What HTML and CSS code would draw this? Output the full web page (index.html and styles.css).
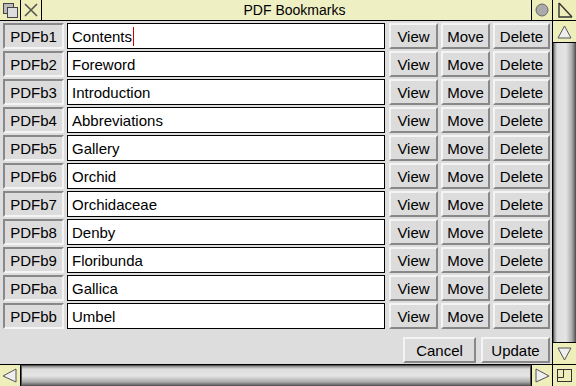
FILE: index.html
```html
<!DOCTYPE html>
<html>
<head>
<meta charset="utf-8">
<link rel="stylesheet" href="styles.css">
</head>
<body>
<div class="window">
  <div class="titlerow">
    <div class="tool"><svg width="20" height="20" viewBox="0 0 20 20"><rect x="3.5" y="3.5" width="10" height="10" fill="#bbb" stroke="#444"/><rect x="7.5" y="7.5" width="10" height="10" fill="#ddd" stroke="#444"/></svg></div>
    <div class="tool"><svg width="20" height="20" viewBox="0 0 20 20"><path d="M4 4 L16 16 M16 4 L4 16" stroke="#555" stroke-width="1.6"/></svg></div>
    <div class="title">PDF Bookmarks</div>
    <div class="tool"><svg width="20" height="20" viewBox="0 0 20 20"><circle cx="10" cy="10" r="6" fill="#aaa" stroke="#666"/></svg></div>
    <div class="tool wide"><svg width="23" height="20" viewBox="0 0 23 20"><path d="M6 3 L6 17 L19 17" fill="none" stroke="#333" stroke-width="1.4"/><path d="M6 3 L19 17" stroke="#333" stroke-width="1.4"/></svg></div>
  </div>
  <div class="middle">
    <div class="work">
      <div class="row"><div class="label">PDFb1</div><div class="field">Contents<span class="caret"></span></div><div class="btn view">View</div><div class="btn move">Move</div><div class="btn del">Delete</div></div>
      <div class="row"><div class="label">PDFb2</div><div class="field">Foreword</div><div class="btn view">View</div><div class="btn move">Move</div><div class="btn del">Delete</div></div>
      <div class="row"><div class="label">PDFb3</div><div class="field">Introduction</div><div class="btn view">View</div><div class="btn move">Move</div><div class="btn del">Delete</div></div>
      <div class="row"><div class="label">PDFb4</div><div class="field">Abbreviations</div><div class="btn view">View</div><div class="btn move">Move</div><div class="btn del">Delete</div></div>
      <div class="row"><div class="label">PDFb5</div><div class="field">Gallery</div><div class="btn view">View</div><div class="btn move">Move</div><div class="btn del">Delete</div></div>
      <div class="row"><div class="label">PDFb6</div><div class="field">Orchid</div><div class="btn view">View</div><div class="btn move">Move</div><div class="btn del">Delete</div></div>
      <div class="row"><div class="label">PDFb7</div><div class="field">Orchidaceae</div><div class="btn view">View</div><div class="btn move">Move</div><div class="btn del">Delete</div></div>
      <div class="row"><div class="label">PDFb8</div><div class="field">Denby</div><div class="btn view">View</div><div class="btn move">Move</div><div class="btn del">Delete</div></div>
      <div class="row"><div class="label">PDFb9</div><div class="field">Floribunda</div><div class="btn view">View</div><div class="btn move">Move</div><div class="btn del">Delete</div></div>
      <div class="row"><div class="label">PDFba</div><div class="field">Gallica</div><div class="btn view">View</div><div class="btn move">Move</div><div class="btn del">Delete</div></div>
      <div class="row"><div class="label">PDFbb</div><div class="field">Umbel</div><div class="btn view">View</div><div class="btn move">Move</div><div class="btn del">Delete</div></div>
      <div class="actions"><div class="btn cancel">Cancel</div><div class="btn update">Update</div></div>
    </div>
    <div class="vscroll">
      <div class="arrow"><svg width="23" height="20" viewBox="0 0 23 20"><path d="M11.5 4 L18 16 L5 16 Z" fill="#eee" stroke="#555"/></svg></div>
      <div class="vtrough"><div class="vslider"></div></div>
      <div class="arrow"><svg width="23" height="20" viewBox="0 0 23 20"><path d="M11.5 16 L18 4 L5 4 Z" fill="#eee" stroke="#555"/></svg></div>
    </div>
  </div>
  <div class="bottomrow">
    <div class="arrow hl"><svg width="20" height="21" viewBox="0 0 20 21"><path d="M3 11 L16 4 L16 17 Z" fill="#eee" stroke="#555"/></svg></div>
    <div class="htrough"><div class="hslider"></div></div>
    <div class="arrow hr"><svg width="20" height="21" viewBox="0 0 20 21"><path d="M17 11 L4 4 L4 17 Z" fill="#eee" stroke="#555"/></svg></div>
    <div class="arrow corner"><svg width="23" height="21" viewBox="0 0 23 21"><rect x="4.5" y="4.5" width="14" height="12" fill="none" stroke="#333"/><path d="M4.5 12.5 L10.5 12.5 L10.5 4.5" fill="none" stroke="#333"/></svg></div>
  </div>
</div>
</body>
</html>
```
FILE: styles.css
```css
* { box-sizing: border-box; }
html, body { margin: 0; padding: 0; }
body { width: 576px; height: 386px; overflow: hidden; background: #000; font-family: "Liberation Sans", Arial, sans-serif; font-size: 15px; color: #000; }
.window { width: 576px; height: 386px; display: flex; flex-direction: column; gap: 1px; background: #000; }
.titlerow { height: 20px; display: flex; gap: 1px; flex: none; }
.tool { width: 20px; height: 20px; background: #eeeebb; display: flex; align-items: center; justify-content: center; flex: none; }
.tool.wide { width: 23px; }
.title { flex: 1; background: #efefc4; display: flex; align-items: center; justify-content: center; font-size: 14px; padding-left: 16px; }
.middle { flex: 1; display: flex; gap: 1px; min-height: 0; }
.work { flex: 1; background: #dddddd; padding: 2px 0 0 3px; display: flex; flex-direction: column; gap: 2px; }
.row { display: flex; height: 26px; gap: 3px; }
.label { width: 61px; height: 26px; border: 2px solid; border-color: #888 #f4f4f4 #f4f4f4 #888; background: #dcdcdc; display: flex; align-items: center; justify-content: center; }
.field { width: 318px; height: 26px; margin-right: 1px; border: 1px solid #000; background: #fff; display: flex; align-items: center; padding-left: 4px; }
.caret { display: inline-block; width: 1px; height: 19px; background: #c00; margin-left: 1px; position: relative; }
.btn { height: 26px; border: 2px solid; border-color: #f4f4f4 #888 #888 #f4f4f4; background: #dcdcdc; display: flex; align-items: center; justify-content: center; }
.view, .move { width: 49px; }
.del { width: 57px; }
.actions { display: flex; justify-content: flex-end; gap: 5px; padding-right: 2px; margin-top: 6px; }
.cancel { width: 73px; }
.update { width: 69px; }
.vscroll { width: 23px; display: flex; flex-direction: column; gap: 1px; flex: none; }
.arrow { height: 21px; background: #eeeebb; display: flex; align-items: center; justify-content: center; flex: none; }
.vtrough { flex: 1; background: #555; padding: 0 1px; }
.vslider { height: 100%; background: linear-gradient(90deg, #888 0, #ddd 3px, #e4e4e4 12px, #aaa 18px, #666 21px); }
.bottomrow { height: 21px; display: flex; gap: 1px; flex: none; }
.bottomrow .arrow { width: 20px; }
.bottomrow .corner { width: 23px; }
.htrough { flex: 1; background: #555; padding: 1px 0; }
.hslider { height: 100%; margin: 0 1px; background: linear-gradient(180deg, #888 0, #ddd 3px, #e4e4e4 10px, #aaa 16px, #666 19px); }
```
